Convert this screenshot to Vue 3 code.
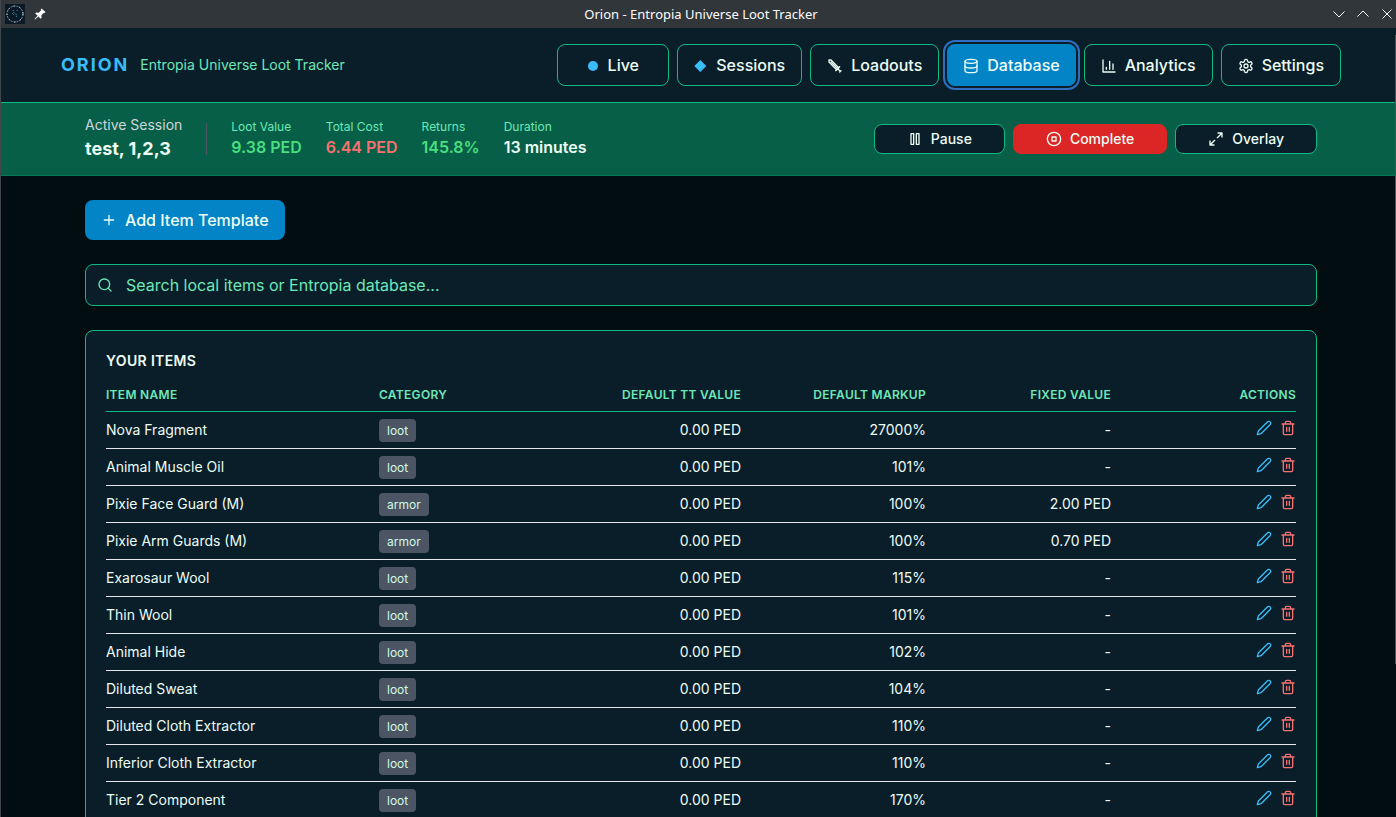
<template>
  <div class="window">
    <div class="titlebar">
      <div class="titlebar-left">
        <svg class="app-icon" viewBox="0 0 20 20">
          <rect width="20" height="20" fill="#0b1826" />
          <circle cx="10" cy="10" r="8" fill="none" stroke="#7f97a3" stroke-width="1" stroke-dasharray="2 1" />
          <circle cx="10" cy="10" r="8" fill="none" stroke="#dfe9ec" stroke-width="1" stroke-dasharray="1 5" />
          <path d="M8 6l1 3 3 2-1 3M7 9l2 2M12 6v2" fill="none" stroke="#1d9fb0" stroke-width="1" stroke-dasharray="1 1" />
        </svg>
        <svg class="pin-icon" viewBox="0 0 12 12">
          <path d="M7.500 0.500l4 3.500-1.200 1.200-.8-.2-2.100 2.300.2 2.500-1 1-2.200-2.300L1 11.500l-.5-.4 3.100-3.400L1.200 5.500l1-1 2.500.2L7 2.500l-.3-1z" fill="#fcfcfc" />
        </svg>
      </div>
      <div class="titlebar-text">Orion - Entropia Universe Loot Tracker</div>
      <div class="titlebar-right">
        <button type="button" aria-label="Minimize">
          <svg viewBox="0 0 12 12"><path d="M0.500 3.500l5.500 5.500 5.500-5.500" /></svg>
        </button>
        <button type="button" aria-label="Maximize">
          <svg viewBox="0 0 12 12"><path d="M0.500 8.500l5.500-5.500 5.500 5.500" /></svg>
        </button>
        <button type="button" aria-label="Close">
          <svg viewBox="0 0 12 12"><path d="M1.500 1.500l9 9M10.500 1.500l-9 9" /></svg>
        </button>
      </div>
    </div>

    <header class="header">
      <div class="container header-inner">
        <div class="brand">
          <h1>ORION</h1>
          <span>Entropia Universe Loot Tracker</span>
        </div>
        <nav class="nav">
          <button
            v-for="tab in tabs"
            :key="tab.name"
            type="button"
            class="nav-button"
            :class="{ active: tab.name === activeTab, live: tab.name === 'Live' }"
            @click="activeTab = tab.name"
          >
            <span v-if="tab.shape" class="shape" :class="tab.shape"></span>
            <svg v-else class="icon" viewBox="0 0 24 24" v-html="icons[tab.icon]"></svg>
            {{ tab.name }}
          </button>
        </nav>
      </div>
    </header>

    <section class="session">
      <div class="container session-inner">
        <div class="session-info">
          <div>
            <div class="session-label">Active Session</div>
            <div class="session-name">test, 1,2,3</div>
          </div>
          <div class="divider"></div>
          <div v-for="stat in stats" :key="stat.label">
            <div class="stat-label">{{ stat.label }}</div>
            <div class="stat-value" :class="stat.tone">{{ stat.value }}</div>
          </div>
        </div>
        <div class="session-actions">
          <button type="button" class="session-button">
            <svg class="icon" viewBox="0 0 24 24" v-html="icons.pause"></svg>
            Pause
          </button>
          <button type="button" class="session-button danger">
            <svg class="icon" viewBox="0 0 24 24" v-html="icons.stop"></svg>
            Complete
          </button>
          <button type="button" class="session-button">
            <svg class="icon" viewBox="0 0 24 24" v-html="icons.expand"></svg>
            Overlay
          </button>
        </div>
      </div>
    </section>

    <main class="main">
      <div class="container content">
        <button type="button" class="add-button">
          <svg class="icon" viewBox="0 0 24 24" v-html="icons.plus"></svg>
          Add Item Template
        </button>

        <label class="search">
          <svg class="icon" viewBox="0 0 24 24" v-html="icons.search"></svg>
          <input
            v-model="query"
            type="text"
            aria-label="Search items"
            placeholder="Search local items or Entropia database..."
          />
        </label>

        <section class="panel">
          <h2>Your Items</h2>
          <table>
            <colgroup>
              <col class="col-name" />
              <col class="col-category" />
              <col v-for="n in 4" :key="n" class="col-value" />
            </colgroup>
            <thead>
              <tr>
                <th>Item Name</th>
                <th>Category</th>
                <th class="right">Default TT Value</th>
                <th class="right">Default Markup</th>
                <th class="right">Fixed Value</th>
                <th class="right">Actions</th>
              </tr>
            </thead>
            <tbody>
              <tr v-for="item in filteredItems" :key="item.name">
                <td>{{ item.name }}</td>
                <td><span class="badge">{{ item.category }}</span></td>
                <td class="right">0.00 PED</td>
                <td class="right">{{ item.markup }}%</td>
                <td class="right">{{ item.fixed || "-" }}</td>
                <td>
                  <div class="row-actions">
                    <button type="button" class="edit" :aria-label="'Edit ' + item.name">
                      <svg class="icon" viewBox="0 0 24 24" v-html="icons.pen"></svg>
                    </button>
                    <button type="button" class="delete" :aria-label="'Delete ' + item.name">
                      <svg class="icon" viewBox="0 0 24 24" v-html="icons.trash"></svg>
                    </button>
                  </div>
                </td>
              </tr>
            </tbody>
          </table>
        </section>
      </div>
    </main>

    <div class="scroll-thumb"></div>
  </div>
</template>

<script setup>
import { ref, computed } from "vue";

const activeTab = ref("Database");
const query = ref("");

const tabs = [
  { name: "Live", shape: "dot" },
  { name: "Sessions", shape: "diamond" },
  { name: "Loadouts", icon: "sword" },
  { name: "Database", icon: "database" },
  { name: "Analytics", icon: "chart" },
  { name: "Settings", icon: "settings" },
];

const stats = [
  { label: "Loot Value", value: "9.38 PED", tone: "good" },
  { label: "Total Cost", value: "6.44 PED", tone: "bad" },
  { label: "Returns", value: "145.8%", tone: "good" },
  { label: "Duration", value: "13 minutes", tone: "" },
];

const items = ref([
  { name: "Nova Fragment", category: "loot", markup: 27000 },
  { name: "Animal Muscle Oil", category: "loot", markup: 101 },
  { name: "Pixie Face Guard (M)", category: "armor", markup: 100, fixed: "2.00 PED" },
  { name: "Pixie Arm Guards (M)", category: "armor", markup: 100, fixed: "0.70 PED" },
  { name: "Exarosaur Wool", category: "loot", markup: 115 },
  { name: "Thin Wool", category: "loot", markup: 101 },
  { name: "Animal Hide", category: "loot", markup: 102 },
  { name: "Diluted Sweat", category: "loot", markup: 104 },
  { name: "Diluted Cloth Extractor", category: "loot", markup: 110 },
  { name: "Inferior Cloth Extractor", category: "loot", markup: 110 },
  { name: "Tier 2 Component", category: "loot", markup: 170 },
]);

const filteredItems = computed(() =>
  items.value.filter((item) =>
    item.name.toLowerCase().includes(query.value.toLowerCase())
  )
);

const icons = {
  sword:
    '<path d="M14.5 17.5L3 6V3h3l11.5 11.5z"/><path d="M6 6l10 10M13 19l6-6M16 16l4 4M19 21l2-2"/>',
  database:
    '<ellipse cx="12" cy="5" rx="9" ry="3"/><path d="M3 5v14a9 3 0 0 0 18 0V5"/><path d="M3 12a9 3 0 0 0 18 0"/>',
  chart: '<path d="M3 3v18h18M8 17v-3M13 17V5M18 17V9"/>',
  settings:
    '<path d="M12.220 2h-.440a2 2 0 0 0-2 2v.180a2 2 0 0 1-1 1.730l-.430.250a2 2 0 0 1-2 0l-.150-.080a2 2 0 0 0-2.730.730l-.220.380a2 2 0 0 0 .730 2.730l.150.100a2 2 0 0 1 1 1.720v.510a2 2 0 0 1-1 1.740l-.150.090a2 2 0 0 0-.730 2.730l.220.380a2 2 0 0 0 2.730.730l.150-.080a2 2 0 0 1 2 0l.430.250a2 2 0 0 1 1 1.730V20a2 2 0 0 0 2 2h.440a2 2 0 0 0 2-2v-.180a2 2 0 0 1 1-1.730l.430-.250a2 2 0 0 1 2 0l.150.080a2 2 0 0 0 2.730-.730l.220-.390a2 2 0 0 0-.730-2.730l-.150-.080a2 2 0 0 1-1-1.740v-.500a2 2 0 0 1 1-1.740l.150-.090a2 2 0 0 0 .730-2.730l-.220-.380a2 2 0 0 0-2.730-.730l-.150.080a2 2 0 0 1-2 0l-.430-.250a2 2 0 0 1-1-1.730V4a2 2 0 0 0-2-2z"/><circle cx="12" cy="12" r="3"/>',
  pause:
    '<rect x="6" y="4" width="4" height="16"/><rect x="14" y="4" width="4" height="16"/>',
  stop: '<circle cx="12" cy="12" r="10"/><rect x="9" y="9" width="6" height="6"/>',
  expand: '<path d="M15 3h6v6M9 21H3v-6M21 3l-7 7M3 21l7-7"/>',
  plus: '<path d="M5 12h14M12 5v14"/>',
  search: '<circle cx="11" cy="11" r="8"/><path d="M21 21l-4.300-4.300"/>',
  pen: '<path d="M17 3a2.850 2.830 0 1 1 4 4L7.500 20.500 2 22l1.500-5.500z"/>',
  trash:
    '<path d="M3 6h18M19 6v14a2 2 0 0 1-2 2H7a2 2 0 0 1-2-2V6M8 6V4a2 2 0 0 1 2-2h4a2 2 0 0 1 2 2v2M10 11v6M14 11v6"/>',
};
</script>

<style>
body {
  margin: 0;
  background: #020d12;
}
</style>

<style scoped>
* {
  box-sizing: border-box;
}

.window {
  position: relative;
  height: 100vh;
  overflow: hidden;
  display: flex;
  flex-direction: column;
  border-left: 1px solid #41464b;
  background: #020d12;
  color: #ecfdf5;
  font-family: Inter, sans-serif;
  font-size: 14px;
  line-height: 20px;
}

/* sliver of the scrollbar lying over the right edge */
.scroll-thumb {
  position: absolute;
  top: 35px;
  right: 0;
  width: 1px;
  height: 77%;
  background: #4b5054;
}

button {
  margin: 0;
  padding: 0;
  border: 0;
  background: none;
  color: inherit;
  font-family: inherit;
  cursor: pointer;
}

.icon {
  width: 16px;
  height: 16px;
  flex: none;
  fill: none;
  stroke: currentColor;
  stroke-width: 2;
  stroke-linecap: round;
  stroke-linejoin: round;
}

.titlebar {
  flex: none;
  display: grid;
  grid-template-columns: 1fr auto 1fr;
  align-items: center;
  height: 28px;
  padding: 0 3px 0 4px;
  background: #31363b;
  color: #fcfcfc;
}

.titlebar-left {
  display: flex;
  align-items: center;
  gap: 9px;
}

.app-icon {
  width: 20px;
  height: 20px;
}

.pin-icon {
  width: 12px;
  height: 12px;
}

.titlebar-text {
  padding-left: 4px;
  font-family: "Noto Sans", sans-serif;
  font-size: 13px;
}

.titlebar-right {
  display: flex;
  justify-content: flex-end;
  gap: 12px;
}

.titlebar-right button {
  display: flex;
}

.titlebar-right svg {
  width: 12px;
  height: 12px;
  fill: none;
  stroke: #fcfcfc;
}

.container {
  max-width: 1280px;
  margin: 0 auto;
}

.header,
.session,
.main {
  flex: none;
  padding-left: 5px;
}

.header {
  background: #0a1e2a;
  border-bottom: 1px solid #10b981;
}

.header-inner {
  display: flex;
  align-items: center;
  justify-content: space-between;
  padding: 16px 0;
}

.brand {
  display: flex;
  align-items: center;
  gap: 11px;
}

.brand h1 {
  margin: 0;
  color: #38bdf8;
  font-size: 18px;
  font-weight: 700;
  letter-spacing: 2px;
}

.brand span {
  color: #6ee7b7;
}

.nav {
  display: flex;
  gap: 8px;
}

.nav-button {
  display: flex;
  align-items: center;
  justify-content: center;
  gap: 8px;
  padding: 8px 16px;
  border: 1px solid #10b981;
  border-radius: 8px;
  background: #0a1e2a;
  font-size: 16px;
  font-weight: 500;
  line-height: 24px;
}

.nav-button.live {
  min-width: 112px;
}

.nav-button.active {
  border: 0;
  background: #0284c7;
  outline: 2px solid #2e6fc0;
  outline-offset: 2px;
}

.nav-button .icon {
  margin-top: 2px;
}

.shape {
  margin: 2px 2px 0 0;
  background: #38bdf8;
}

.dot {
  width: 10px;
  height: 10px;
  border-radius: 50%;
}

.diamond {
  width: 12px;
  height: 12px;
  clip-path: polygon(50% 0, 100% 50%, 50% 100%, 0 50%);
}

.session {
  background: #065f46;
  border-bottom: 1px solid #047857;
}

.session-inner {
  display: flex;
  align-items: center;
  justify-content: space-between;
  padding: 12px 24px;
}

.session-info {
  display: flex;
  align-items: center;
  gap: 24px;
}

.session-label {
  color: #d1d5db;
}

.session-name {
  font-size: 18px;
  font-weight: 700;
  line-height: 28px;
}

.divider {
  width: 1px;
  height: 32px;
  background: #4b5563;
}

.stat-label {
  color: #6ee7b7;
  font-size: 12px;
  line-height: 16px;
}

.stat-value {
  font-size: 16px;
  font-weight: 600;
  line-height: 24px;
}

.good {
  color: #4ade80;
}

.bad {
  color: #f87171;
}

.session-actions {
  display: flex;
  gap: 8px;
}

.session-button {
  display: flex;
  align-items: center;
  gap: 8px;
  padding: 4px 32px;
  border: 1px solid #10b981;
  border-radius: 8px;
  background: #0a1e2a;
  font-size: 14px;
  font-weight: 500;
  line-height: 20px;
}

.session-button.danger {
  border-color: #dc2626;
  background: #dc2626;
}

.content {
  display: flex;
  flex-direction: column;
  align-items: flex-start;
  gap: 24px;
  padding: 24px;
}

.add-button {
  display: flex;
  align-items: center;
  gap: 8px;
  padding: 8px 16px;
  border-radius: 8px;
  background: #0284c7;
  font-size: 16px;
  font-weight: 500;
  line-height: 24px;
}

.search {
  display: flex;
  align-items: center;
  gap: 13px;
  width: 100%;
  padding: 8px 11px;
  border: 1px solid #10b981;
  border-radius: 8px;
  background: #0a1e2a;
  color: #6ee7b7;
}

.search input {
  flex: 1;
  height: 24px;
  padding: 0;
  border: 0;
  outline: none;
  background: none;
  color: #ecfdf5;
  font-family: inherit;
  font-size: 16px;
}

.search input::placeholder {
  color: #6ee7b7;
  opacity: 1;
}

.panel {
  width: 100%;
  padding: 20px;
  border: 1px solid #10b981;
  border-radius: 8px;
  background: #0a1e2a;
}

.panel h2 {
  margin: 0 0 16px;
  font-size: 14px;
  font-weight: 600;
  letter-spacing: 0.025em;
  line-height: 20px;
  text-transform: uppercase;
}

table {
  width: 100%;
  table-layout: fixed;
  border-collapse: separate;
  border-spacing: 0;
}

.col-name {
  width: 273px;
}

.col-category {
  width: 177px;
}

.col-value {
  width: 185px;
}

th {
  padding: 0 0 8px;
  border-bottom: 1px solid #10b981;
  color: #6ee7b7;
  font-size: 12px;
  font-weight: 600;
  letter-spacing: 0.025em;
  line-height: 16px;
  text-align: left;
  text-transform: uppercase;
}

td {
  height: 37px;
  padding: 0;
  border-bottom: 1px solid #e5e7eb;
}

.right {
  text-align: right;
}

.badge {
  display: inline-block;
  padding: 4px 8px 3px;
  border-radius: 4px;
  background: #4b5563;
  color: #d1fae5;
  font-size: 12px;
  line-height: 16px;
  vertical-align: middle;
}

.row-actions {
  display: flex;
  justify-content: flex-end;
  gap: 8px;
  padding-bottom: 4px;
}

.row-actions button {
  display: flex;
}

.edit {
  color: #38bdf8;
}

.delete {
  color: #f87171;
}
</style>
